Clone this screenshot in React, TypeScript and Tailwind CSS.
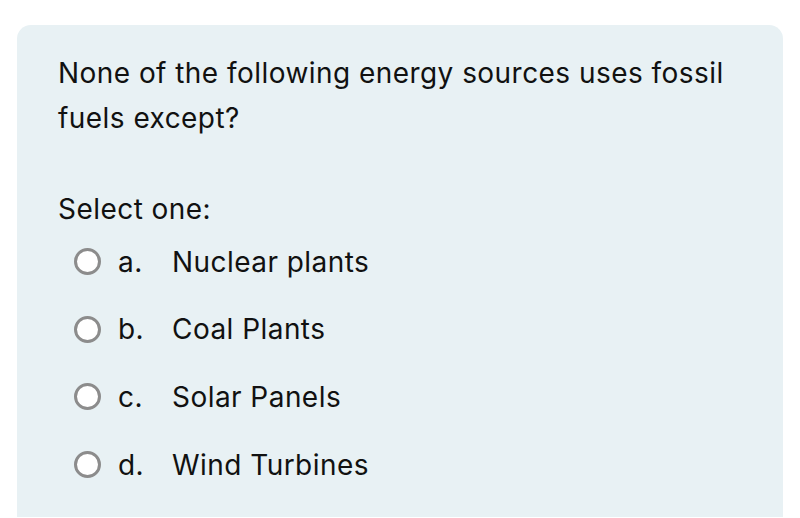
import React from "react";

const options = [
  { l: "a.", t: "Nuclear plants" },
  { l: "b.", t: "Coal Plants" },
  { l: "c.", t: "Solar Panels" },
  { l: "d.", t: "Wind Turbines" },
];

export default function App() {
  return (
    <div
      className="w-[800px] h-[518px] bg-white pt-[25px] px-[17px] overflow-hidden"
      style={{ fontFamily: 'Inter, "Liberation Sans", Arial, sans-serif' }}
    >
      <div className="h-[492px] bg-[#e8f1f4] rounded-t-[14px] pl-[41px] pt-[26px] text-[#111] text-[28px] tracking-[0.45px]">
        <p className="leading-[45px] w-[700px]">
          None of the following energy sources uses fossil fuels except?
        </p>
        <p className="mt-[46px] leading-[45px]">Select one:</p>
        <div className="flex flex-col gap-[22.7px] mt-[7px]">
          {options.map((o) => (
            <div key={o.l} className="flex items-center h-[45px]">
              <span className="ml-[16px] w-[27px] h-[27px] rounded-full border-[3px] border-[#8c8c8c] bg-white shrink-0" />
              <span className="ml-[17px] w-[54px]">{o.l}</span>
              <span>{o.t}</span>
            </div>
          ))}
        </div>
      </div>
    </div>
  );
}
